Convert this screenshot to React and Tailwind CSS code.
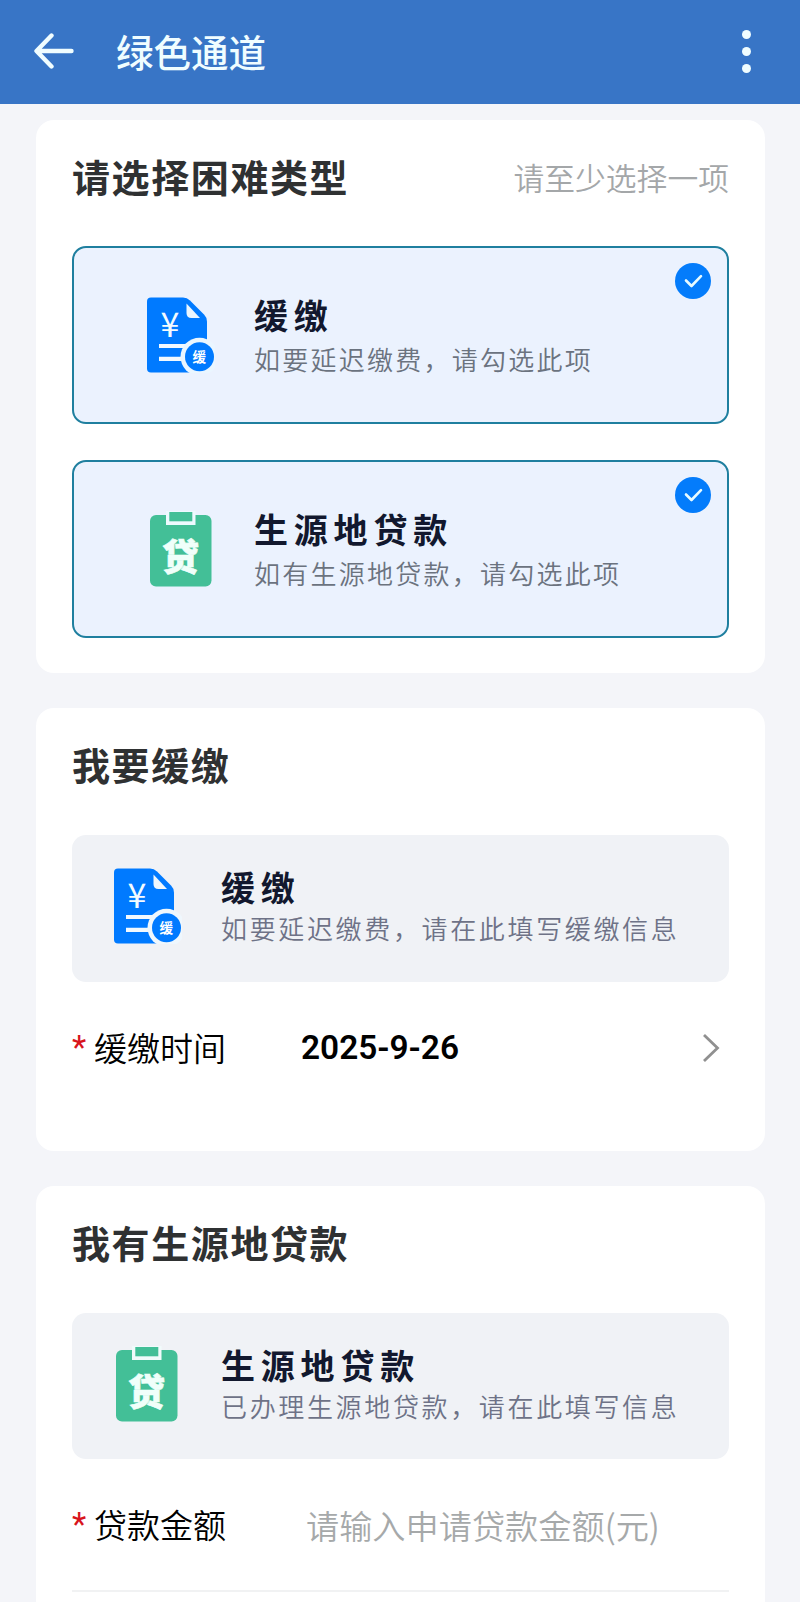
import React, { useState } from "react";

const DeferIcon = ({ ring }) => (
  <svg width="68" height="76" viewBox="0 0 68 76" className="shrink-0">
    <path d="M4 0.5H36Q40 0.5 43 3.5L57 17.5Q60 20.5 60 24.5V75.5H4Q0 75.5 0 71.5V4.5Q0 0.5 4 0.5Z" fill="#007aff" />
    <path d="M39.5 6.5L53 21H44.5Q39.5 21 39.5 16Z" fill={ring} />
    <text x="23" y="39.5" textAnchor="middle" fontSize="34" fill="#f4fbff" className="font-['Noto_Sans_CJK_SC',sans-serif] font-normal">¥</text>
    <path d="M12 49H40M12 61.8H38" stroke="#f1f9ff" strokeWidth="4.2" />
    <circle cx="52.5" cy="59.7" r="19" fill={ring} />
    <circle cx="52.5" cy="59.7" r="14.5" fill="#007aff" />
    <text x="52.3" y="64.7" textAnchor="middle" fontSize="13.5" fill="#fff" className="font-['Noto_Sans_CJK_SC',sans-serif] font-bold">缓</text>
  </svg>
);

const LoanIcon = ({ ring }) => (
  <svg width="62" height="76" viewBox="0 0 62 76" className="shrink-0">
    <rect x="0" y="4" width="61.5" height="71.5" rx="6" fill="#43bf97" />
    <rect x="16" y="0" width="29.5" height="14" fill={ring} />
    <rect x="19.3" y="1" width="23" height="9.3" fill="#43bf97" />
    <text x="30.5" y="59.5" textAnchor="middle" fontSize="37" fill="#f0fffa" stroke="#f0fffa" strokeWidth="0.6" className="font-['Noto_Sans_CJK_SC',sans-serif] font-black">贷</text>
  </svg>
);

const BackIcon = () => (
  <svg width="40" height="36" viewBox="0 0 40 36" fill="none" stroke="#f0fdff" strokeWidth="4.4" strokeLinecap="round" strokeLinejoin="round">
    <path d="M37.5 18H3M17.5 2.5L2.5 18L17.5 33.5" />
  </svg>
);

const Texts = ({ title, desc, wide }) => (
  <div className="flex flex-col">
    <span className="text-[34px] leading-[44px] font-bold tracking-[5.8px] text-[#12182e]">{title}</span>
    <span
      className={`text-[26px] font-[350] whitespace-nowrap ${
        wide ? "leading-[38px] tracking-[2.65px] text-[#6e7287]" : "leading-[43px] tracking-[2.25px] text-[#6b737f]"
      }`}
    >
      {desc}
    </span>
  </div>
);

const Option = ({ icon, title, desc, checked, onClick }) => (
  <div
    onClick={onClick}
    className="relative flex h-[178px] cursor-pointer items-center rounded-[14px] border-2 border-[#1f7f9f] bg-[#ebf2fe] pl-[73px]"
  >
    <div className="flex w-[107px] items-center">{icon}</div>
    <div className="pt-[2px]">
      <Texts title={title} desc={desc} />
    </div>
    {checked && (
      <div className="absolute top-[15px] right-[16px] flex size-[36px] items-center justify-center rounded-full bg-[#047cfb]">
        <svg width="19" height="14" viewBox="0 0 19 14" fill="none" stroke="#e8fbff" strokeWidth="2.6" strokeLinecap="round" strokeLinejoin="round">
          <path d="M2 6.5L7.5 12L17 2.2" />
        </svg>
      </div>
    )}
  </div>
);

const Heading = ({ children, hint }) => (
  <div className="mb-[9px] flex h-[118px] items-center justify-between">
    <h2 className="pb-[7px] text-[38px] font-bold tracking-[1.6px] text-[#2f3132]">{children}</h2>
    {hint && <span className="pb-[4px] text-[30.8px] font-[350] text-[#a4a7a9]">{hint}</span>}
  </div>
);

const Label = ({ children }) => (
  <div className="flex w-[229px] items-center text-[33px] text-black">
    <span className="w-[22px] font-['Roboto',sans-serif] text-[#d8141c]">*</span>
    <span className="font-[350]">{children}</span>
  </div>
);

const App = () => {
  const [selected, setSelected] = useState({ defer: true, loan: true });
  const toggle = (key) => setSelected({ ...selected, [key]: !selected[key] });

  return (
    <div className="h-[1602px] w-[800px] overflow-hidden bg-[#f4f5f9] font-['Noto_Sans_CJK_SC',sans-serif]">
      <header className="flex h-[104px] items-center bg-[#3875c6] pr-[49px] pb-[2px] pl-[34px]">
        <BackIcon />
        <h1 className="ml-[42px] flex-1 text-[37.5px] font-medium text-[#f0fdff]">绿色通道</h1>
        <div className="flex flex-col gap-[8px]">
          <i className="size-[9px] rounded-full bg-[#f0fdff]" />
          <i className="size-[9px] rounded-full bg-[#f0fdff]" />
          <i className="size-[9px] rounded-full bg-[#f0fdff]" />
        </div>
      </header>

      <main className="flex flex-col gap-[35px] pt-[16px] pr-[35px] pl-[36px]">
        <section className="h-[553px] rounded-[18px] bg-white px-[36px]">
          <div className="-mb-px">
            <Heading hint="请至少选择一项">请选择困难类型</Heading>
          </div>
          <div className="flex flex-col gap-[36px]">
            <Option
              icon={<DeferIcon ring="#eaf6ff" />}
              title="缓缴"
              desc="如要延迟缴费，请勾选此项"
              checked={selected.defer}
              onClick={() => toggle("defer")}
            />
            <Option
              icon={<div className="pl-[3px]"><LoanIcon ring="#eefaff" /></div>}
              title="生源地贷款"
              desc="如有生源地贷款，请勾选此项"
              checked={selected.loan}
              onClick={() => toggle("loan")}
            />
          </div>
        </section>

        <section className="h-[443px] rounded-[18px] bg-white px-[36px]">
          <Heading>我要缓缴</Heading>
          <div className="flex h-[147px] items-center rounded-[14px] bg-[#f0f2f6] pb-[5px] pl-[42px]">
            <div className="w-[107px]"><DeferIcon ring="#eff7fd" /></div>
            <Texts title="缓缴" desc="如要延迟缴费，请在此填写缓缴信息" wide />
          </div>
          <div className="flex h-[132px] items-center">
            <Label>缓缴时间</Label>
            <span className="flex-1 pt-px font-['Roboto',sans-serif] text-[33.4px] font-semibold text-black">2025-9-26</span>
            <svg width="18" height="30" viewBox="0 0 18 30" fill="none" stroke="#909090" strokeWidth="2.8" className="mr-[9px]">
              <path d="M2 2L15.5 15L2 28" />
            </svg>
          </div>
        </section>

        <section className="h-[460px] rounded-t-[18px] bg-white px-[36px]">
          <Heading>我有生源地贷款</Heading>
          <div className="flex h-[146px] items-center rounded-[14px] bg-[#f0f2f6] pb-[4px] pl-[44px]">
            <div className="w-[105px]"><LoanIcon ring="#f1fbfb" /></div>
            <Texts title="生源地贷款" desc="已办理生源地贷款，请在此填写信息" wide />
          </div>
          <div className="flex h-[133px] items-center border-b-2 border-[#f1f2f3]">
            <Label>贷款金额</Label>
            <span className="ml-[5px] text-[33.2px] font-[350] text-[#a6a9aa]">请输入申请贷款金额(元)</span>
          </div>
        </section>
      </main>
    </div>
  );
};

export default App;
